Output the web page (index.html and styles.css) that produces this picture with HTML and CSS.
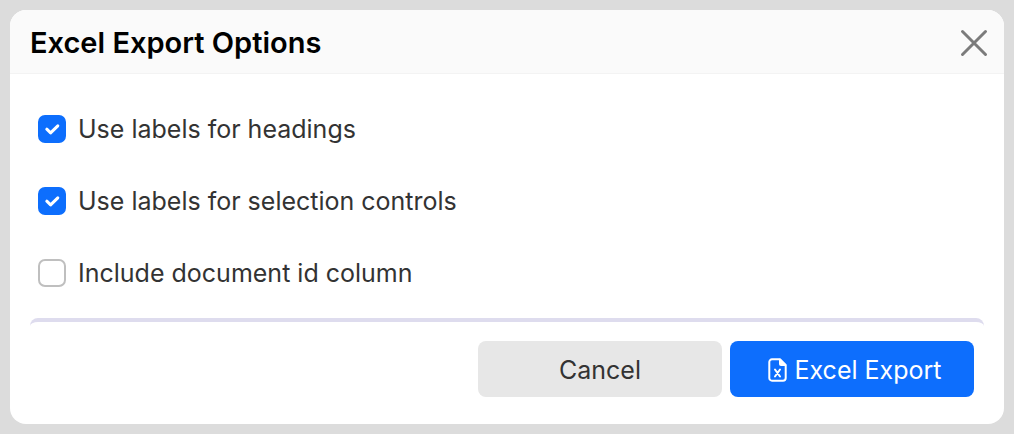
FILE: index.html
```
<!DOCTYPE html>
<html lang="en">
<head>
    <meta charset="UTF-8" />
    <meta name="viewport" content="width=device-width, initial-scale=1" />
    <title>Excel Export Options</title>
    <link rel="stylesheet" href="styles.css">
</head>
<body>

<div class="dialog" role="dialog" aria-labelledby="dialogTitle">
    <header class="dialog-header">
        <h1 id="dialogTitle">Excel Export Options</h1>
        <button class="close" type="button" aria-label="Close">
            <svg width="28" height="28" viewBox="0 0 28 28"><path d="M2.5 2.5L25.5 25.5M25.5 2.5L2.5 25.5"/></svg>
        </button>
    </header>

    <form class="dialog-body" onsubmit="return false;">
        <div class="options">
            <div class="option">
                <span class="box">
                    <input id="headings" type="checkbox" checked>
                    <svg class="tick" viewBox="0 0 28 28"><path d="M8.800 14.200L12.600 17.800L19.800 10.800"/></svg>
                </span>
                <label for="headings">Use labels for headings</label>
            </div>
            <div class="option">
                <span class="box">
                    <input id="controls" type="checkbox" checked>
                    <svg class="tick" viewBox="0 0 28 28"><path d="M8.800 14.200L12.600 17.800L19.800 10.800"/></svg>
                </span>
                <label for="controls">Use labels for selection controls</label>
            </div>
            <div class="option">
                <span class="box">
                    <input id="documentId" type="checkbox">
                    <svg class="tick" viewBox="0 0 28 28"><path d="M8.800 14.200L12.600 17.800L19.800 10.800"/></svg>
                </span>
                <label for="documentId">Include document id column</label>
            </div>
        </div>

        <div class="actions">
            <button class="button" type="button">Cancel</button>
            <button class="button primary" type="submit">
                <svg class="file" width="20" height="24" viewBox="0 0 20 24">
                    <path class="page" d="M12 1.3H4A2.7 2.7 0 0 0 1.3 4V20A2.7 2.7 0 0 0 4 22.7H15A2.7 2.7 0 0 0 17.7 20V7Z"/>
                    <path class="fold" d="M11 .5V6Q11 8 13 8H18.500Z"/>
                    <path class="cross" d="M7 11.500L12 18.500M12 11.500L7 18.500"/>
                </svg>
                Excel Export
            </button>
        </div>
    </form>
</div>

</body>
</html>
```
FILE: styles.css
```
* {
    box-sizing: border-box;
}
body {
    margin: 0;
    padding: 10px;
    background-color: #dcdcdc;
    font-family: Inter, "Liberation Sans", sans-serif;
    font-size: 25px;
    line-height: 30px;
    color: #333;
}
.dialog {
    background-color: white;
    border-radius: 16px;
    overflow: hidden;
}
.dialog-header {
    display: flex;
    align-items: center;
    justify-content: space-between;
    height: 64px;
    padding: 2px 16px 0 20px;
    background-color: #fafafa;
    border-bottom: 1px solid #f3f3f3;
}
h1 {
    margin: 0;
    font-size: 29px;
    font-weight: 600;
    line-height: 36px;
    color: black;
}
.close {
    display: flex;
    padding: 0;
    border: none;
    background: none;
    cursor: pointer;
}
.close svg {
    fill: none;
    stroke: #7b7b7b;
    stroke-width: 3;
    stroke-linecap: round;
}
.dialog-body {
    padding: 40px 20px 27px;
}
.options {
    display: flex;
    flex-direction: column;
    gap: 42px;
    padding: 0 8px 30px;
}
.option {
    display: flex;
    align-items: center;
    gap: 12px;
}
.box {
    display: grid;
    width: 28px;
    height: 28px;
}
.box input,
.tick {
    grid-area: 1 / 1;
    width: 28px;
    height: 28px;
    margin: 0;
}
.box input {
    appearance: none;
    border: 2px solid #bfbfbf;
    border-radius: 7px;
    background-color: white;
}
.box input:checked {
    border-color: #0d6efd;
    background-color: #0d6efd;
}
.tick {
    display: none;
    fill: none;
    stroke: white;
    stroke-width: 3;
    stroke-linecap: round;
    stroke-linejoin: round;
    pointer-events: none;
}
.box input:checked + .tick {
    display: block;
}
.actions {
    display: flex;
    justify-content: flex-end;
    gap: 8px;
    padding: 19px 10px 0;
    border-top: 4px solid #dedcee;
    border-radius: 8px;
}
.button {
    display: flex;
    align-items: center;
    justify-content: center;
    gap: 6px;
    min-width: 244px;
    height: 56px;
    padding: 2px 24px 0;
    border: none;
    border-radius: 8px;
    background-color: #e7e7e7;
    font: inherit;
    color: #333;
    cursor: pointer;
}
.primary {
    padding: 2px 20px 0 26px;
    background-color: #0d6efd;
    color: white;
}
.file {
    fill: none;
    stroke: white;
    stroke-width: 2;
    stroke-linecap: round;
    stroke-linejoin: round;
}
.file .fold {
    fill: white;
    stroke: none;
}
```
